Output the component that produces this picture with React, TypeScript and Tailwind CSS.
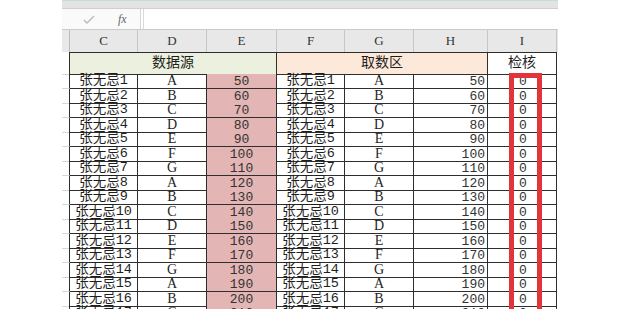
import React from "react";

const rows = Array.from({ length: 17 }, (_, i) => ({
  name: `张无忌${i + 1}`,
  letter: "ABCDEFG"[i % 7],
  value: 50 + 10 * i,
}));

const cols = "grid grid-cols-[8px_68px_69px_70px_68px_69px_74px_69px]";
const cell = "flex items-center border-r border-b border-[#2e2e2e]";
const cjk = "font-['Liberation_Mono','Noto_Sans_CJK_SC',monospace]";
const mono = "font-['Liberation_Mono',monospace]";
const serif = "font-['Liberation_Serif',serif]";

export default function App() {
  return (
    <div className="relative h-[309px] w-[620px] overflow-hidden bg-white text-[#1e1e1e]">
      <div className="ml-[62px] w-[496px]">
        <div className="h-px bg-[#bfe3cc]" />
        <div className="h-[8px] border-b border-[#d0d0d0] bg-[#e3e3e3]" />
        <div className="flex h-[21px] border-b border-[#cbcbcb] bg-white">
          <div className="flex w-[79px] items-center border-r border-[#d6d6d6] bg-[#fafafa]">
            <svg className="ml-[21px]" width="12" height="9" viewBox="0 0 12 9">
              <polyline points="1,5 4,8 11,1" fill="none" stroke="#b9b9b9" strokeWidth="1.4" />
            </svg>
            <span className={`ml-[23px] ${serif} text-[12px] italic text-[#666]`}>fx</span>
          </div>
          <div className="ml-[2px] flex-1 border-l border-[#dadada] bg-white" />
        </div>

        {/* column letters */}
        <div className={`${cols} h-[22px] bg-[#e8e8e8]`}>
          <div className="border-r border-[#bdbdbd]" />
          {["C", "D", "E", "F", "G", "H", "I"].map((c) => (
            <div
              key={c}
              className={`flex items-center justify-center border-r border-[#c6c6c6] ${serif} text-[13px] text-[#333]`}
            >
              {c}
            </div>
          ))}
        </div>

        {/* group header */}
        <div className={`${cols} h-[22px] ${cjk} text-[14px]`}>
          <div className="border-r border-b border-r-[#2e2e2e] border-b-[#d8d8d8]" />
          <div className={`${cell} col-span-3 justify-center border-t bg-[#ebf1de]`}>数据源</div>
          <div className={`${cell} col-span-3 justify-center border-t bg-[#fde9d9]`}>取数区</div>
          <div className={`${cell} justify-center border-t bg-white`}>检核</div>
        </div>

        {rows.map((r, i) => (
          <div key={i} className={`${cols} ${i % 2 === 0 ? "h-[15px]" : "h-[14px]"}`}>
            <div className="border-r border-b border-r-[#2e2e2e] border-b-[#d8d8d8]" />
            <div className={`${cell} justify-center ${cjk} text-[13.5px] leading-none`}>{r.name}</div>
            <div className={`${cell} justify-center ${serif} text-[14px] leading-none`}>{r.letter}</div>
            <div className={`${cell} justify-center bg-[#e3b6b5] ${mono} text-[13px] leading-none text-[#333]`}>
              {r.value}
            </div>
            <div className={`${cell} justify-center ${cjk} text-[13.5px] leading-none`}>{r.name}</div>
            <div className={`${cell} justify-center ${serif} text-[14px] leading-none`}>{r.letter}</div>
            <div className={`${cell} justify-end pr-[2px] ${mono} text-[13px] leading-none text-[#333]`}>
              {r.value}
            </div>
            <div className={`${cell} justify-center pl-[2px] ${mono} text-[13px] leading-none text-[#333]`}>0</div>
          </div>
        ))}
      </div>

      <div className="absolute left-[509px] top-[73px] h-[260px] w-[33px] border-[5px] border-[#e2353b]" />
    </div>
  );
}
